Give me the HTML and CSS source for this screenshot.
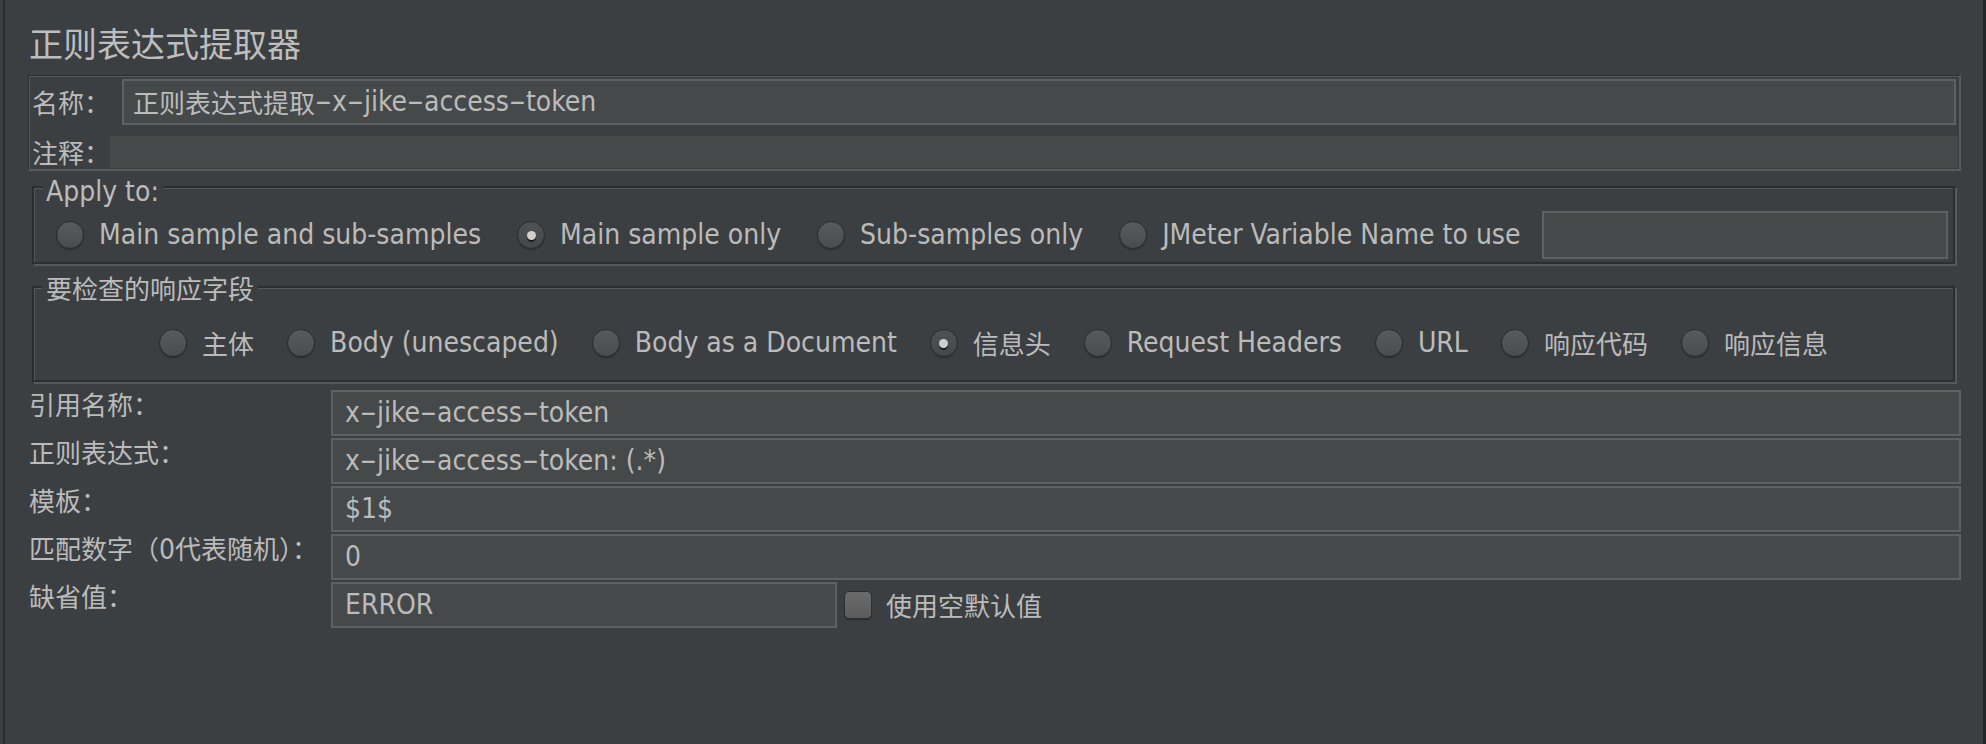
FILE: index.html
```html
<!DOCTYPE html>
<html lang="zh-CN">
<head>
<meta charset="utf-8">
<title>正则表达式提取器</title>
<link rel="stylesheet" href="styles.css">
</head>
<body>
<div class="panel">
  <h1 class="title">正则表达式提取器</h1>

  <div class="namebox">
    <div class="nb-row nb-row-name">
      <span class="cjk nb-label nb-label-name">名称：</span>
      <div class="field field-name"><span class="cjk">正则表达式提取</span><span class="lat"><span class="hy">-</span>x<span class="hy">-</span>jike<span class="hy">-</span>access<span class="hy">-</span>token</span></div>
    </div>
    <div class="nb-row nb-row-comment">
      <span class="cjk nb-label nb-label-comment">注释：</span>
      <div class="field-comment"></div>
    </div>
  </div>

  <div class="group group-apply">
    <div class="group-title lat">Apply to:</div>
    <div class="radio-row apply-row">
      <div class="radio-item"><span class="radio"></span><span class="lat">Main sample and sub-samples</span></div>
      <div class="radio-item"><span class="radio is-checked"></span><span class="lat">Main sample only</span></div>
      <div class="radio-item"><span class="radio"></span><span class="lat">Sub-samples only</span></div>
      <div class="radio-item radio-item-last"><span class="radio"></span><span class="lat">JMeter Variable Name to use</span></div>
      <div class="field field-var"></div>
    </div>
  </div>

  <div class="group group-fields">
    <div class="group-title cjk">要检查的响应字段</div>
    <div class="radio-row fields-row">
      <div class="radio-item"><span class="radio"></span><span class="cjk">主体</span></div>
      <div class="radio-item"><span class="radio"></span><span class="lat">Body (unescaped)</span></div>
      <div class="radio-item"><span class="radio"></span><span class="lat">Body as a Document</span></div>
      <div class="radio-item"><span class="radio is-checked"></span><span class="cjk">信息头</span></div>
      <div class="radio-item"><span class="radio"></span><span class="lat">Request Headers</span></div>
      <div class="radio-item"><span class="radio"></span><span class="lat">URL</span></div>
      <div class="radio-item"><span class="radio"></span><span class="cjk">响应代码</span></div>
      <div class="radio-item radio-item-last"><span class="radio"></span><span class="cjk">响应信息</span></div>
    </div>
  </div>

  <div class="form-grid">
    <span class="cjk form-label">引用名称：</span>
    <div class="field form-field"><span class="lat">x<span class="hy">-</span>jike<span class="hy">-</span>access<span class="hy">-</span>token</span></div>

    <span class="cjk form-label">正则表达式：</span>
    <div class="field form-field"><span class="lat">x<span class="hy">-</span>jike<span class="hy">-</span>access<span class="hy">-</span>token: (.*)</span></div>

    <span class="cjk form-label">模板：</span>
    <div class="field form-field"><span class="lat">$1$</span></div>

    <span class="cjk form-label">匹配数字（<span class="lat">0</span>代表随机）：</span>
    <div class="field form-field"><span class="lat">0</span></div>

    <span class="cjk form-label">缺省值：</span>
    <div class="default-cell">
      <div class="field form-field field-error"><span class="lat">ERROR</span></div>
      <span class="checkbox"></span>
      <span class="cjk checkbox-text">使用空默认值</span>
    </div>
  </div>
</div>
</body>
</html>
```

FILE: styles.css
```css
* {
  box-sizing: border-box;
}

html,
body {
  margin: 0;
  padding: 0;
  background: #3c3f41;
}

body {
  width: 1986px;
  height: 744px;
  overflow: hidden;
}

.panel {
  margin-left: 3px;
  height: 744px;
  border-left: 2px solid #2a2c2e;
  border-right: 3px solid #222425;
  padding: 26px 22px 0 24px;
  color: #bbbbbb;
}

.cjk {
  font-family: "Noto Sans CJK SC", "DejaVu Sans Condensed", sans-serif;
  font-size: 26px;
  line-height: 26px;
}

.lat {
  font-family: "DejaVu Sans Condensed", "DejaVu Sans", "Noto Sans CJK SC", sans-serif;
  font-stretch: 87.5%;
  font-size: 28px;
  line-height: 28px;
}

.cjk .lat {
  line-height: 26px;
}

/* the source font draws long hyphens */
.hy {
  display: inline-block;
  width: 17px;
  text-align: center;
  transform: scaleX(1.9);
}

.title {
  margin: 0 0 15px;
  font-family: "Noto Sans CJK SC", sans-serif;
  font-weight: 400;
  font-size: 34px;
  line-height: 34px;
  color: #bdbdbd;
}

/* name / comment box */
.namebox {
  margin-left: -1px;
  border-top: 1px solid #2a2c2e;
  border-left: 1px solid #2a2c2e;
  border-right: 2px solid #585b5d;
  border-bottom: 2px solid #585b5d;
  box-shadow: inset 1px 1px 0 #585b5d;
  padding-bottom: 1px;
}

.nb-row {
  display: flex;
  align-items: center;
}

.nb-row-name {
  margin-top: 3px;
}

.nb-row-comment {
  margin-top: 11px;
}

.nb-label {
  flex: none;
  padding-left: 3px;
  white-space: nowrap;
}

.nb-label-name {
  width: 93px;
}

.nb-label-comment {
  width: 81px;
}

.field {
  background: #45494a;
  border: 2px solid #5e6163;
  display: flex;
  align-items: center;
  white-space: nowrap;
  overflow: hidden;
}

.field-name {
  flex: 1;
  height: 46px;
  margin-right: 3px;
  padding-left: 9px;
}

.field-comment {
  flex: 1;
  height: 32px;
  margin-right: 1px;
  background: #45494a;
}

/* titled groups */
.group {
  margin: 0 6px 0 3px;
  border: 2px solid #2b2d2f;
  box-shadow: inset 1px 1px 0 #56595b, 2px 2px 0 #56595b;
}

.group-title {
  width: max-content;
  margin-left: 8px;
  padding: 0 4px;
  background: #3c3f41;
  white-space: nowrap;
}

.group-apply {
  margin-top: 15px;
  padding-bottom: 3px;
}

.group-apply .group-title {
  margin-top: -10px;
}

.group-fields {
  margin-top: 22px;
  padding-bottom: 22px;
}

.group-fields .group-title {
  margin-top: -13px;
}

.radio-row {
  display: flex;
  align-items: center;
  white-space: nowrap;
}

.apply-row {
  height: 48px;
  margin-top: 5px;
  padding-left: 22px;
}

.fields-row {
  height: 30px;
  margin-top: 27px;
  justify-content: center;
}

.radio-item {
  display: flex;
  align-items: center;
  flex: none;
  margin-right: 36px;
}

.radio-item-last {
  margin-right: 0;
}

.fields-row .radio-item {
  margin-right: 33px;
}

.fields-row .radio-item-last {
  margin-right: 0;
}

.radio {
  flex: none;
  width: 28px;
  height: 28px;
  margin-right: 15px;
  border-radius: 50%;
  border: 1px solid #2a2c2e;
  background: linear-gradient(#585b5e, #4a4d50);
  box-shadow: 0 1px 1px rgba(0, 0, 0, 0.35);
  display: flex;
  align-items: center;
  justify-content: center;
}

.radio.is-checked {
  background: linear-gradient(#4f5255, #45484a);
}

.radio.is-checked::after {
  content: "";
  width: 9px;
  height: 9px;
  border-radius: 50%;
  background: #cfcfcf;
  box-shadow: 0 2px 0 #1c1d1e;
}

.field-var {
  flex: 1;
  height: 48px;
  margin-left: 21px;
  margin-right: 5px;
}

/* bottom form */
.form-grid {
  display: grid;
  grid-template-columns: 302px 1fr;
  row-gap: 2px;
  margin-top: 8px;
}

.form-label {
  align-self: start;
  padding-top: 1px;
  white-space: nowrap;
}

.form-field {
  height: 46px;
  padding-left: 12px;
}

.default-cell {
  display: flex;
  align-items: center;
}

.field-error {
  flex: none;
  width: 506px;
}

.checkbox {
  flex: none;
  width: 28px;
  height: 28px;
  margin-left: 7px;
  border-radius: 5px;
  border: 1px solid #2c2e30;
  background: linear-gradient(#6b6b6b, #5b5b5b);
  box-shadow: 0 1px 1px rgba(0, 0, 0, 0.35);
}

.checkbox-text {
  margin-left: 14px;
}
```
